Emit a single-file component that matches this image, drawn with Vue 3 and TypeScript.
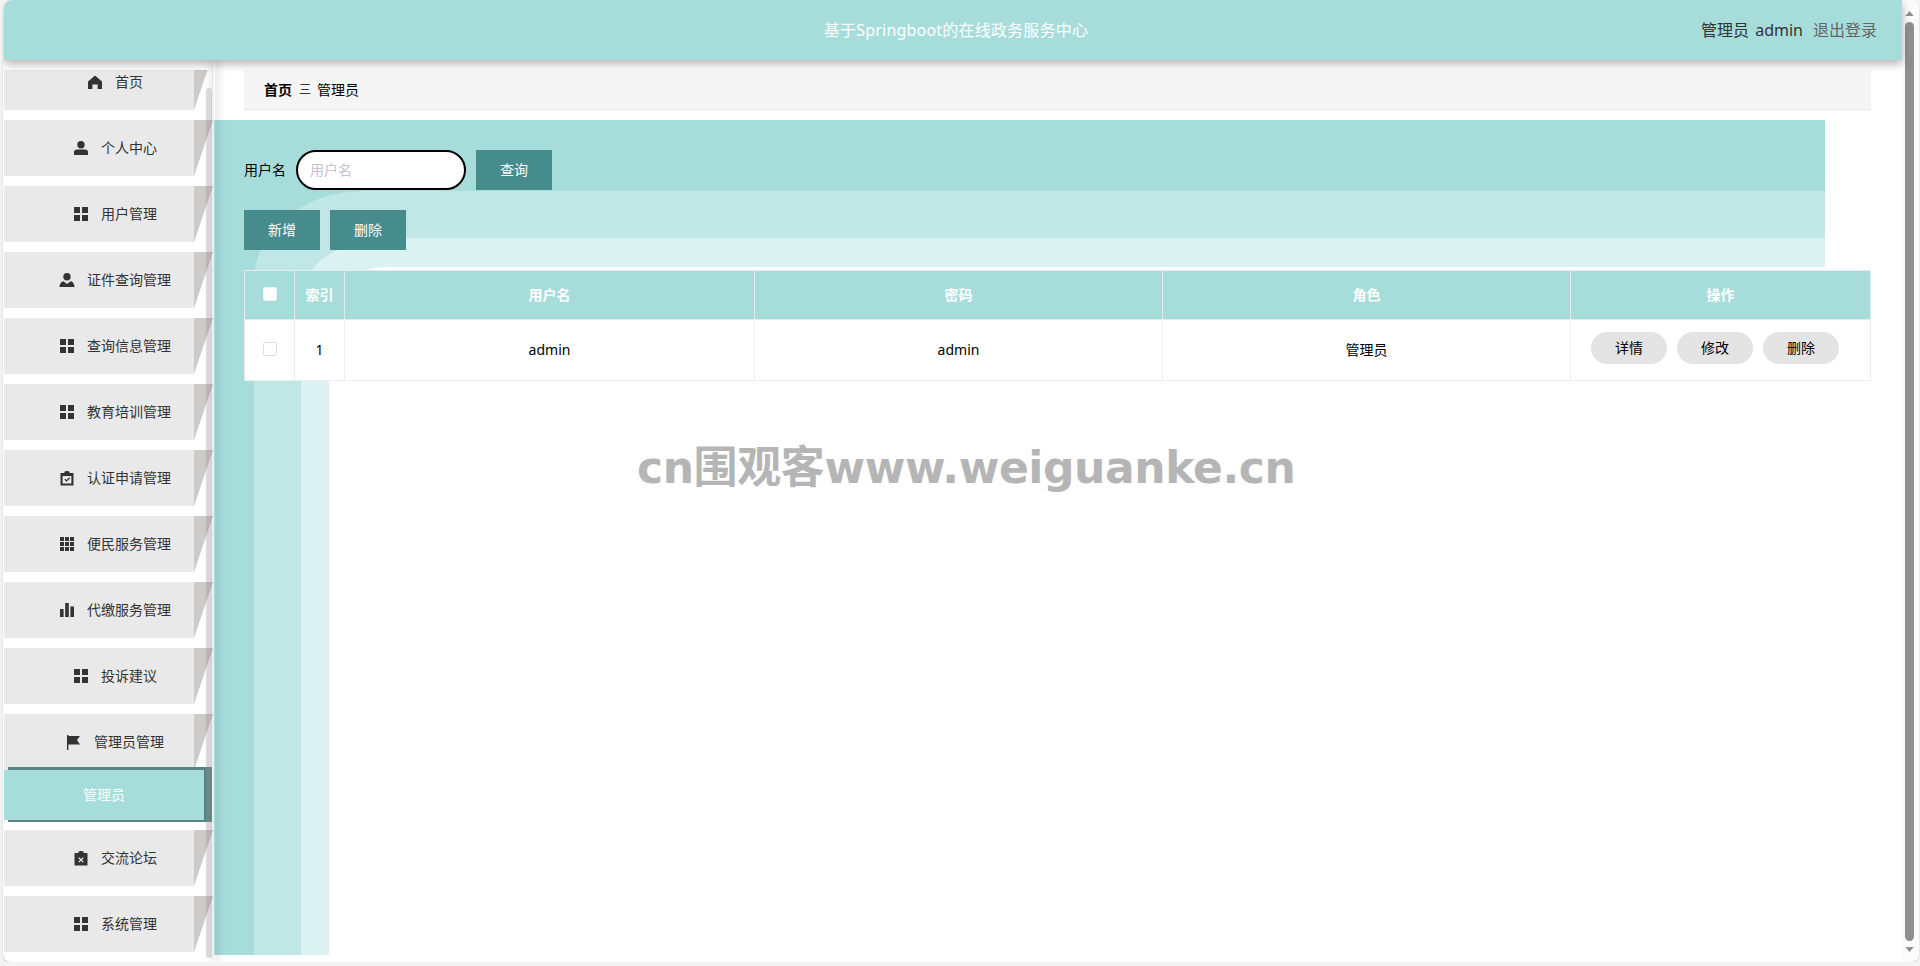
<script setup lang="ts">
type IconName = 'home' | 'user' | 'custom' | 'menu' | 'check' | 'grid' | 'data' | 'flag' | 'release'

interface NavItem {
  label: string
  icon: IconName
}

const before: NavItem[] = [
  { label: '首页', icon: 'home' },
  { label: '个人中心', icon: 'user' },
  { label: '用户管理', icon: 'menu' },
  { label: '证件查询管理', icon: 'custom' },
  { label: '查询信息管理', icon: 'menu' },
  { label: '教育培训管理', icon: 'menu' },
  { label: '认证申请管理', icon: 'check' },
  { label: '便民服务管理', icon: 'grid' },
  { label: '代缴服务管理', icon: 'data' },
  { label: '投诉建议', icon: 'menu' },
  { label: '管理员管理', icon: 'flag' }
]
const after: NavItem[] = [
  { label: '交流论坛', icon: 'release' },
  { label: '系统管理', icon: 'menu' }
]

const iconPaths: Record<IconName, string> = {
  home: 'M7 0.5 L14 6.5 L14 14 L9.6 14 L9.6 9.4 L4.4 9.4 L4.4 14 L0 14 L0 6.5 Z',
  user: 'M7 0 A3.6 3.6 0 1 1 7 7.4 A3.6 3.6 0 1 1 7 0 Z M3 8.6 L11 8.6 Q14 8.6 14 11.4 L14 14 L0 14 L0 11.4 Q0 8.6 3 8.6 Z',
  custom: 'M7 0 A3.6 3.6 0 1 1 7 7.4 A3.6 3.6 0 1 1 7 0 Z M3.4 8.2 L7 11 L10.6 8.2 Q14 8.8 14.6 14 L-0.6 14 Q0 8.8 3.4 8.2 Z',
  menu: 'M0 0 H6 V6 H0 Z M8 0 H14 V6 H8 Z M0 8 H6 V14 H0 Z M8 8 H14 V14 H8 Z',
  check: 'M0.5 2 H4.4 V0.6 H5.6 V0 H8.4 V0.6 H9.6 V2 H13.5 V14.4 H0.5 Z M2.6 5 V12.6 H11.4 V5 Z M4.3 8.6 L5.2 7.7 L6.4 9 L9.4 6.3 L10.2 7.2 L6.4 10.8 Z',
  grid: 'M0 0 H4 V4 H0 Z M5 0 H9 V4 H5 Z M10 0 H14 V4 H10 Z M0 5 H4 V9 H0 Z M5 5 H9 V9 H5 Z M10 5 H14 V9 H10 Z M0 10 H4 V14 H0 Z M5 10 H9 V14 H5 Z M10 10 H14 V14 H10 Z',
  data: 'M0 6 H3.6 V14 H0 Z M5.2 0 H8.8 V14 H5.2 Z M10.4 3.6 H14 V14 H10.4 Z',
  flag: 'M0 0 H1.4 V15 H0 Z M1.4 1 H13 L10 5 L13 9.4 H1.4 Z',
  release: 'M0.5 2 H4.4 V0.6 H5.6 V0 H8.4 V0.6 H9.6 V2 H13.5 V14.4 H0.5 Z M5.2 6.2 L4.3 7.1 L6.1 8.9 L4.3 10.7 L5.2 11.6 L7 9.8 L8.8 11.6 L9.7 10.7 L7.9 8.9 L9.7 7.1 L8.8 6.2 L7 8 Z'
}

const columns = ['用户名', '密码', '角色']
const row = ['admin', 'admin', '管理员']
const actions = ['详情', '修改', '删除']
</script>

<template>
  <div class="window">
    <div class="page">
      <header class="topbar">
        <div class="title">基于Springboot的在线政务服务中心</div>
        <div class="account">
          <span class="who">管理员 admin</span>
          <span class="logout">退出登录</span>
        </div>
      </header>

      <div class="body">
        <aside class="sidebar">
          <nav class="nav">
            <div v-for="item in before" :key="item.label" class="nav-item">
              <svg class="nav-icon" viewBox="-1 0 16 15" fill-rule="evenodd"><path :d="iconPaths[item.icon]" /></svg>
              <span class="nav-text">{{ item.label }}</span>
            </div>
            <div class="nav-sub"><span class="nav-text">管理员</span></div>
            <div v-for="item in after" :key="item.label" class="nav-item">
              <svg class="nav-icon" viewBox="-1 0 16 15" fill-rule="evenodd"><path :d="iconPaths[item.icon]" /></svg>
              <span class="nav-text">{{ item.label }}</span>
            </div>
          </nav>
          <div class="side-scroll"></div>
        </aside>

        <main class="main">
          <div class="crumb">
            <span class="crumb-home">首页</span>
            <span class="crumb-sep">三</span>
            <span class="crumb-here">管理员</span>
          </div>

          <section class="panel">
            <div class="tier tier-1">
              <div class="tier tier-2">
                <div class="tier tier-3">
                  <div class="tier tier-4"></div>
                </div>
              </div>
            </div>

            <div class="content">
              <div class="search">
                <label class="search-label">用户名</label>
                <input class="search-input" placeholder="用户名" />
                <button class="btn"><span class="lift">查询</span></button>
              </div>
              <div class="tools">
                <button class="btn"><span class="lift">新增</span></button>
                <button class="btn"><span class="lift">删除</span></button>
              </div>
              <div class="table">
                <div class="cell head"><i class="box box-head"></i></div>
                <div class="cell head">索引</div>
                <div v-for="c in columns" :key="c" class="cell head">{{ c }}</div>
                <div class="cell head">操作</div>
                <div class="cell"><i class="box"></i></div>
                <div class="cell">1</div>
                <div v-for="(v, i) in row" :key="i" class="cell">{{ v }}</div>
                <div class="cell cell-actions">
                  <button v-for="a in actions" :key="a" class="pill">{{ a }}</button>
                </div>
              </div>
            </div>
          </section>

          <div class="watermark">cn围观客www.weiguanke.cn</div>
        </main>
      </div>
    </div>

    <div class="scrollbar">
      <svg class="arrow" viewBox="0 0 10 6"><path d="M5 0 L10 6 L0 6 Z" /></svg>
      <div class="thumb"></div>
      <svg class="arrow" viewBox="0 0 10 6"><path d="M0 0 L10 0 L5 6 Z" /></svg>
    </div>
  </div>
</template>

<style>
html, body {
  margin: 0;
  background: #f3f3f3;
  overflow: hidden;
}
</style>

<style scoped>
.window {
  width: 1916px;
  height: 962px;
  display: flex;
  background: #fff;
  border-radius: 8px;
  margin-left: 3px;
  overflow: hidden;
  box-shadow: 0 1px 2px rgba(0, 0, 0, 0.18);
  font-family: "Noto Sans", "Noto Sans CJK SC", sans-serif;
  font-size: 14px;
  color: #000;
}
.page {
  flex: 1;
  min-width: 0;
  padding-left: 1px;
  display: flex;
  flex-direction: column;
}
.scrollbar {
  width: 17px;
  flex: none;
  box-sizing: border-box;
  padding: 11px 3px 10px 0;
  background: #fbfbfb;
  display: flex;
  flex-direction: column;
  align-items: center;
  gap: 6px;
}
.arrow {
  width: 9px;
  height: 5px;
  fill: #8f8f8f;
  flex: none;
}
.thumb {
  flex: 1;
  width: 9px;
  background: #8f8f8f;
  border-radius: 5px;
}
.topbar {
  height: 60px;
  flex: none;
  position: relative;
  z-index: 3;
  background: #a6dddb;
  border-radius: 8px 0 0 0;
  box-shadow: 0 4px 10px rgba(0, 0, 0, 0.3);
  display: flex;
  align-items: center;
  justify-content: center;
}
.title {
  color: #fff;
  font-size: 16px;
  letter-spacing: 0.2px;
  line-height: 60px;
  margin: -1px 0 0 6px;
}
.account {
  position: absolute;
  right: 25px;
  top: -1px;
  height: 60px;
  display: flex;
  align-items: center;
  gap: 10px;
  font-size: 16px;
}
.who {
  color: #333;
  word-spacing: 2px;
}
.logout {
  color: #666;
}
.body {
  flex: 1;
  min-height: 0;
  display: flex;
  overflow: hidden;
}
.sidebar {
  width: 210px;
  flex: none;
  position: relative;
  z-index: 2;
  margin-top: 10px;
}
.sidebar::after {
  content: "";
  position: absolute;
  left: 210px;
  top: -10px;
  bottom: 0;
  width: 1px;
  box-shadow: 0 0 10px 1px rgba(0, 0, 0, 0.28);
}
.nav {
  height: 892px;
  overflow: hidden;
}
.nav-item {
  width: 190px;
  height: 56px;
  box-sizing: border-box;
  padding-left: 32px;
  margin-bottom: 10px;
  position: relative;
  display: flex;
  align-items: center;
  justify-content: center;
  gap: 12px;
  background: #e9e9e9;
  color: #333;
  font-size: 14px;
}
.nav-item:first-child {
  margin-top: -16px;
}
.nav-item::after {
  content: "";
  position: absolute;
  left: 190px;
  top: 0;
  width: 19px;
  height: 56px;
  background: #cccbca;
  clip-path: polygon(0 0, 100% 0, 0 100%);
}
.nav-icon {
  width: 16px;
  height: 15px;
  fill: #333;
  flex: none;
}
.nav-text {
  line-height: 20px;
  margin-top: -1px;
}
.nav-sub {
  width: 200px;
  height: 50px;
  margin: -10px 0 10px;
  position: relative;
  z-index: 1;
  background: #a6dddb;
  color: #fff;
  display: flex;
  align-items: center;
  justify-content: center;
  font-size: 14px;
  box-shadow: 8px 2px 0 #578483, 8px -3px 0 #578483, 4px 2px 0 #578483, 4px -3px 0 #578483;
}
.side-scroll {
  position: absolute;
  z-index: 2;
  left: 202px;
  top: 18px;
  width: 6px;
  bottom: 4px;
  border-radius: 3px;
  background: rgba(144, 147, 153, 0.3);
}
.main {
  flex: 1;
  min-width: 0;
  position: relative;
  padding: 10px 0 0;
}
.crumb {
  width: 1627px;
  height: 40px;
  box-sizing: border-box;
  margin-left: 30px;
  padding: 0 0 2px 20px;
  display: flex;
  align-items: center;
  background: #f6f5f6;
  border-bottom: 1px solid #e9e9e9;
  font-size: 14px;
}
.crumb-home {
  font-weight: 700;
}
.crumb-sep {
  margin: 0 6px 0 7px;
  font-size: 12px;
  color: #333;
}
.panel {
  margin-top: 10px;
  width: 1611px;
  height: 835px;
  display: grid;
  grid-template-columns: 1611px;
  grid-template-rows: 835px;
}
.tier {
  box-sizing: border-box;
  display: flex;
  width: 100%;
  height: 100%;
}
.tier-1 {
  grid-area: 1 / 1;
  background: #a6dddb;
  padding: 71px 0 0 40px;
}
.tier-2 {
  background: #c0e7e5;
  padding: 47px 0 0 47px;
  border-top-left-radius: 110px 90px;
}
.tier-3 {
  background: #dcf1f2;
  padding: 29px 0 0 28px;
  border-top-left-radius: 90px 60px;
}
.tier-4 {
  background: #fff;
  border-top-left-radius: 60px 40px;
}
.content {
  grid-area: 1 / 1;
  position: relative;
  padding: 30px 0 0 30px;
  width: 1627px;
  box-sizing: content-box;
}
.search,
.tools {
  display: flex;
  align-items: center;
  height: 40px;
}
.tools {
  gap: 10px;
  margin-top: 20px;
}
.search-label {
  margin-right: 10px;
  line-height: 1;
  margin-top: -1px;
}
.search-input {
  width: 170px;
  height: 40px;
  box-sizing: border-box;
  padding: 0 12px 2px;
  border: 2px solid #000;
  border-radius: 20px;
  outline: none;
  background: #fff;
  font: inherit;
  color: #333;
}
.search-input::placeholder {
  color: #c0c4cc;
}
.btn {
  width: 76px;
  height: 40px;
  padding: 0;
  border: 0;
  background: #468c8c;
  color: #fff;
  font: inherit;
}
.lift {
  display: block;
  margin-top: -2px;
}
.search .btn {
  margin-left: 10px;
}
.table {
  margin-top: 20px;
  display: grid;
  grid-template-columns: 50px 50px 410px 408px 408px 300px;
  grid-template-rows: 49px 61px;
  border-left: 1px solid #e9e9ef;
  border-top: 1px solid #e9e9ef;
  background: #fff;
  box-sizing: border-box;
  width: 1627px;
}
.cell {
  box-sizing: border-box;
  display: flex;
  align-items: center;
  justify-content: center;
  padding-bottom: 2px;
  border-right: 1px solid #ebeef5;
  border-bottom: 1px solid #ebeef5;
  font-size: 14px;
  color: #000;
}
.head {
  background: #a6dddb;
  color: #fff;
  font-weight: 700;
  border-color: #e6ecec;
  border-bottom-width: 1px;
}
.box {
  display: block;
  width: 14px;
  height: 14px;
  box-sizing: border-box;
  border: 1px solid #dcdfe6;
  border-radius: 2px;
  background: #fff;
}
.box-head {
  border-color: #e6f5f4;
}
.cell-actions {
  gap: 10px;
  padding: 0 11px 5px 0;
}
.pill {
  width: 76px;
  height: 32px;
  padding: 0 0 2px;
  border: 0;
  border-radius: 16px;
  background: #e4e4e4;
  color: #000;
  font: inherit;
}
.watermark {
  position: absolute;
  left: 423px;
  top: 378px;
  color: #b5b5b5;
  font-family: "DejaVu Sans", "Noto Sans CJK SC", sans-serif;
  font-weight: 700;
  font-size: 44px;
  letter-spacing: -0.4px;
  line-height: 60px;
  white-space: nowrap;
  pointer-events: none;
}
</style>
